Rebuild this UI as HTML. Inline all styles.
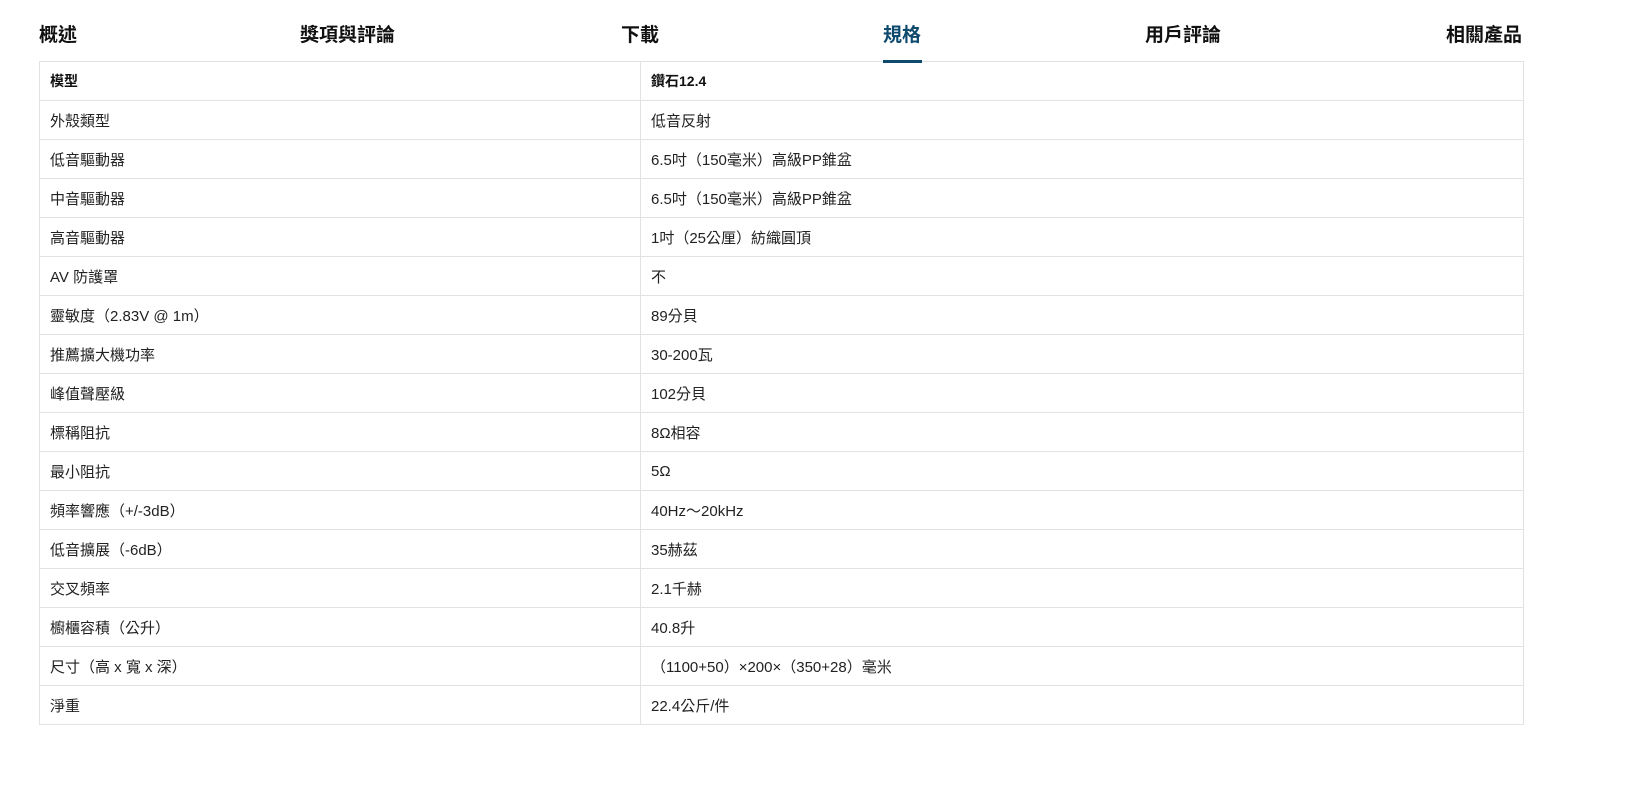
<!DOCTYPE html>
<html><head><meta charset="utf-8"><style>
body{margin:0;background:#fff;font-family:"Liberation Sans","Noto Sans CJK TC",sans-serif;color:#222;}
.tab{position:absolute;top:24px;font-size:19px;font-weight:bold;color:#111;line-height:24px;}
.act{color:#0d4a6e;}
.ul{position:absolute;left:883px;top:60px;width:39px;height:3px;background:#0d4a6e;z-index:2;}
table{position:absolute;left:39px;top:61px;width:1485px;border-collapse:collapse;font-size:15px;}
td{border:1px solid #e2e2e2;height:39px;padding:0 0 0 10px;box-sizing:border-box;}
td:first-child{width:601px;}
tr:first-child td{font-weight:bold;color:#111;font-size:14px;}
</style></head><body>
<div class="tab" style="left:39px">概述</div>
<div class="tab" style="left:300px">獎項與評論</div>
<div class="tab" style="left:621px">下載</div>
<div class="tab act" style="left:883px">規格</div>
<div class="tab" style="left:1145px">用戶評論</div>
<div class="tab" style="left:1446px">相關產品</div>
<div class="ul"></div>
<table>
<tr><td>模型</td><td>鑽石12.4</td></tr>
<tr><td>外殼類型</td><td>低音反射</td></tr>
<tr><td>低音驅動器</td><td>6.5吋（150毫米）高級PP錐盆</td></tr>
<tr><td>中音驅動器</td><td>6.5吋（150毫米）高級PP錐盆</td></tr>
<tr><td>高音驅動器</td><td>1吋（25公厘）紡織圓頂</td></tr>
<tr><td>AV 防護罩</td><td>不</td></tr>
<tr><td>靈敏度（2.83V @ 1m）</td><td>89分貝</td></tr>
<tr><td>推薦擴大機功率</td><td>30-200瓦</td></tr>
<tr><td>峰值聲壓級</td><td>102分貝</td></tr>
<tr><td>標稱阻抗</td><td>8Ω相容</td></tr>
<tr><td>最小阻抗</td><td>5Ω</td></tr>
<tr><td>頻率響應（+/-3dB）</td><td>40Hz〜20kHz</td></tr>
<tr><td>低音擴展（-6dB）</td><td>35赫茲</td></tr>
<tr><td>交叉頻率</td><td>2.1千赫</td></tr>
<tr><td>櫥櫃容積（公升）</td><td>40.8升</td></tr>
<tr><td>尺寸（高 x 寬 x 深）</td><td>（1100+50）×200×（350+28）毫米</td></tr>
<tr><td>淨重</td><td>22.4公斤/件</td></tr>
</table>
</body></html>
